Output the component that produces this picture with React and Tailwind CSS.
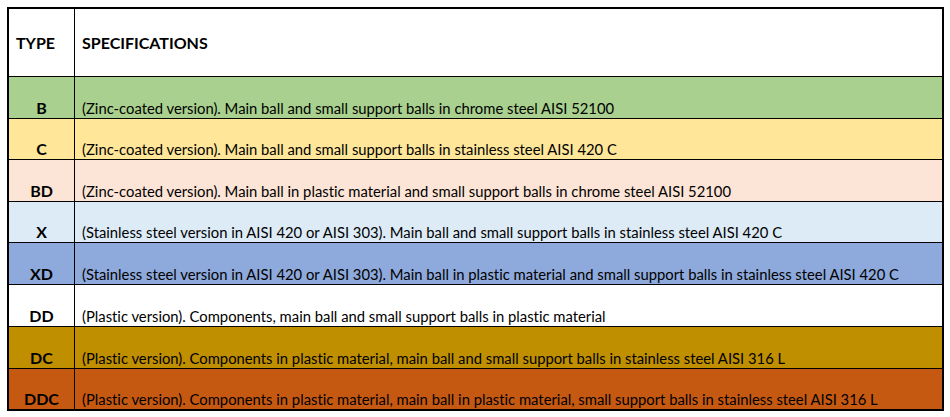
import React from 'react';

const rows = [
  { type: 'B', bg: 'bg-[#a9d08e]', h: 'h-[42px]', text: '(Zinc-coated version). Main ball and small support balls in chrome steel AISI 52100' },
  { type: 'C', bg: 'bg-[#ffe699]', h: 'h-[41px]', text: '(Zinc-coated version). Main ball and small support balls in stainless steel AISI 420 C' },
  { type: 'BD', bg: 'bg-[#fce4d6]', h: 'h-[42px]', text: '(Zinc-coated version). Main ball in plastic material and small support balls in chrome steel AISI 52100' },
  { type: 'X', bg: 'bg-[#ddebf7]', h: 'h-[41px]', text: '(Stainless steel version in AISI 420 or AISI 303). Main ball and small support balls in stainless steel AISI 420 C' },
  { type: 'XD', bg: 'bg-[#8ea9db]', h: 'h-[42px]', text: '(Stainless steel version in AISI 420 or AISI 303). Main ball in plastic material and small support balls in stainless steel AISI 420 C' },
  { type: 'DD', bg: 'bg-white', h: 'h-[42px]', text: '(Plastic version). Components, main ball and small support balls in plastic material' },
  { type: 'DC', bg: 'bg-[#bf8f00]', h: 'h-[42px]', text: '(Plastic version). Components in plastic material, main ball and small support balls in stainless steel AISI 316 L' },
  { type: 'DDC', bg: 'bg-[#c65911]', h: 'h-[41px]', text: '(Plastic version). Components in plastic material, main ball in plastic material, small support balls in stainless steel AISI 316 L' },
];

export default function App() {
  return (
    <div className="w-[950px] h-[417px] bg-white pt-[7px] pl-[7px] font-['Lato',sans-serif] text-[14.8px] text-black [font-variant-ligatures:none]">
      <div className="w-[937px] border-2 border-black">
        {/* header */}
        <div className="flex h-[67px]">
          <div className="w-[66px] shrink-0 border-r border-black flex items-center pl-[7px] font-bold text-[16px]">TYPE</div>
          <div className="flex-1 min-w-0 flex items-center pl-[7px] font-bold text-[16px]">SPECIFICATIONS</div>
        </div>
        {rows.map((r) => (
          <div key={r.type} className={`flex border-t border-black ${r.h} ${r.bg}`}>
            <div className="w-[66px] shrink-0 border-r border-black flex items-end justify-center pb-[1px] leading-[18px] font-bold text-[16px]">
              {r.type}
            </div>
            <div className="flex-1 min-w-0 flex items-end pl-[7px] pb-[1px] leading-[18px] whitespace-nowrap overflow-hidden">
              {r.text}
            </div>
          </div>
        ))}
      </div>
    </div>
  );
}
